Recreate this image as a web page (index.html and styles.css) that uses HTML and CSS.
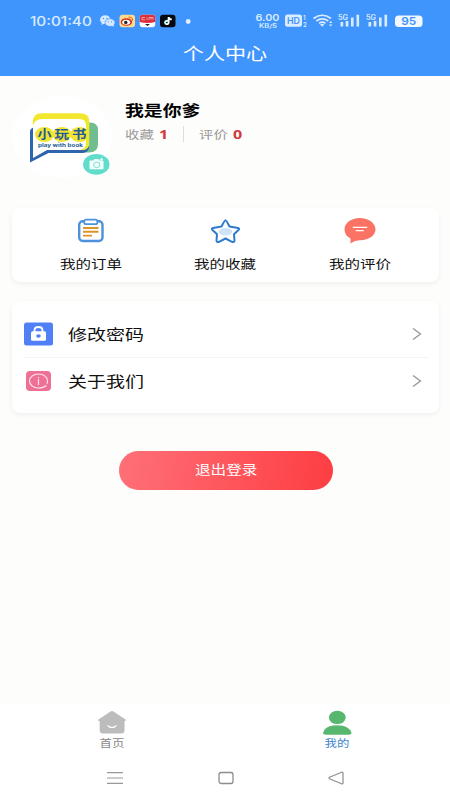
FILE: index.html
```html
<!DOCTYPE html>
<html lang="zh-CN">
<head>
<meta charset="utf-8">
<title>个人中心</title>
<link rel="stylesheet" href="styles.css">
</head>
<body>
<div class="app">
  <header class="header">
    <div class="status">
      <div class="status-left">
        <span class="clock"><span class="wide wide-left">10:01:40</span></span>
        <svg width="96" height="14" viewBox="0 0 96 14">
          <g fill="#d5e9ff"><ellipse cx="5.2" cy="5.6" rx="5.2" ry="4.3"/><path d="M2 8l-.5 3 3-1.5z"/></g>
          <ellipse cx="10" cy="8.6" rx="5" ry="3.9" fill="#d5e9ff" stroke="#4095fd" stroke-width=".7"/><path d="M11 11.5l3 1.2-.6-2.5z" fill="#d5e9ff"/>
          <g fill="#4095fd"><circle cx="3.5" cy="4.5" r=".7"/><circle cx="7" cy="4.5" r=".7"/><circle cx="8.3" cy="7.8" r=".6"/><circle cx="11.6" cy="7.8" r=".6"/></g>
          <rect x="19.5" y=".8" width="15.5" height="12.4" rx="3" fill="#fbdc8e"/>
          <ellipse cx="26.4" cy="8" rx="5.7" ry="3.8" fill="#d92d20"/><ellipse cx="26.2" cy="8.3" rx="4" ry="2.5" fill="#fff"/><circle cx="25.8" cy="8.4" r="1.7" fill="#222"/>
          <path d="M28.5 3.2q4.3-.5 4 3.400M28.800 5q2 0 1.800 1.700" fill="none" stroke="#e35b25" stroke-width="1"/>
          <rect x="39.7" y=".8" width="15.5" height="12.4" rx="3" fill="#fff"/><path d="M39.7 8V4q0-3.200 3.200-3.200H52q3.200 0 3.200 3.200v4q-7.700 2.200-15.500 0z" fill="#dc3038"/>
          <path d="M42 3.500h3M42 3.500v2.300h3M47 3.400v2.400M49 5.800V3.500h4v2.300M51 3.500v2.300" fill="none" stroke="#f7b8ba" stroke-width=".8"/><path d="M45 10l2.500 2 2.500-2z" fill="#222"/>
          <rect x="60" y=".8" width="15.500" height="12.400" rx="3" fill="#07070d"/>
          <g fill="none" stroke-width="1.500"><path d="M67.500 6.600q-3 0-2.700 2.100.5 1.800 2.400 1.300 1.200-.4 1.100-2V3.200q.6 2.200 3 2.400" stroke="#4de1e4"/><path d="M68 6.800q-3 0-2.700 2.100.5 1.800 2.400 1.300 1.200-.4 1.100-2V3.200q.6 2.200 3 2.400" stroke="#fff"/></g>
          <circle cx="88.200" cy="7.500" r="2.400" fill="#e1efff"/>
        </svg>
      </div>
      <svg class="status-right" width="170" height="16" viewBox="0 0 170 16" fill="#d9ebff">
        <g class="status-text">
          <text x="0.500" y="8.300" font-size="9.200" textLength="24" lengthAdjust="spacingAndGlyphs">6.00</text>
          <text x="4" y="14.600" font-size="5.600" textLength="18" lengthAdjust="spacingAndGlyphs">KB/S</text>
          <rect x="30" y="1.500" width="17" height="12.300" rx="2.500"/>
          <text x="32" y="11.300" font-size="9.500" fill="#4095fd" textLength="13" lengthAdjust="spacingAndGlyphs">HD</text>
          <text x="48" y="7" font-size="6">1</text><text x="48" y="13.500" font-size="6">2</text>
          <text x="83" y="6.800" font-size="7" textLength="10" lengthAdjust="spacingAndGlyphs">5G</text>
          <text x="111" y="6.800" font-size="7" textLength="10" lengthAdjust="spacingAndGlyphs">5G</text>
          <rect x="140" y="2.500" width="27.500" height="11.500" rx="3.500" fill="#f0f7ff"/>
          <text x="146.200" y="12" font-size="10.500" fill="#4095fd" textLength="15" lengthAdjust="spacingAndGlyphs">95</text>
        </g>
        <g fill="none" stroke="#d9ebff" stroke-width="1.600"><path d="M58.500 5.500q8.700-6.400 17.500 0M61.300 8q6-4.200 12 0M64 10.300q3.300-2.400 6.500 0"/></g>
        <path d="M65 11.500q2.200-1.300 4.400 0l-2.200 2.200zM74 9.900l1.700-2 1.700 2zM74 11.500l1.700 2 1.700-2z"/>
        <path d="M85.500 9h2.700v4.500h-2.700zM90.700 8h2.700v5.500h-2.700zM96 4.500h2.600v9H96zM101.500 1.800h2.600v11.700h-2.600zM113.500 9h2.700v4.500h-2.700zM118.700 8h2.700v5.500h-2.700zM124 4.500h2.600v9H124zM129.500 1.800h2.600v11.700h-2.600z"/>
      </svg>
    </div>
    <h1 class="title"><span class="wide">个人中心</span></h1>
  </header>

  <main class="main">
    <section class="profile">
      <div class="avatar">
        <svg width="100" height="78" viewBox="0 0 100 78">
          <path d="M76 15.500h4q8 0 8 7.500v14q0 8.500-9 8.500H66z" fill="#70bd90"/>
          <path d="M25 20.500Q20 20.500 20 25V55.500L38.500 46H72q5 0 7-4.500V20.500z" fill="#2f66ab"/>
          <path d="M23 17V51L37 43H72q5.500 0 5.500-6V12H28z" fill="#fff"/>
          <path d="M22.800 19v-4q0-8.800 9-8.800H70q9.300 0 9.300 8.300V36q0 6-5.500 7H70q6-1.500 6-6.500V18q0-6-7-6H32q-7 0-9.200 7z" fill="#f2e72f"/>
          <g fill="#f2e531"><ellipse cx="34.500" cy="27.500" rx="9.500" ry="7.500"/><ellipse cx="52" cy="27.500" rx="9.500" ry="7.500"/><ellipse cx="69.500" cy="27.500" rx="9.500" ry="7.500"/></g>
          <g class="logo-cn" font-size="12">
            <text x="27.500" y="32" textLength="14" lengthAdjust="spacingAndGlyphs">小</text>
            <text x="44.500" y="32" textLength="14.500" lengthAdjust="spacingAndGlyphs">玩</text>
            <text x="62" y="32" textLength="14.500" lengthAdjust="spacingAndGlyphs">书</text>
          </g>
          <text class="logo-en" x="28" y="39.800" font-size="5.200" textLength="45" lengthAdjust="spacingAndGlyphs">play with book</text>
        </svg>
        <span class="camera">
          <svg width="27" height="21" viewBox="0 0 27 21">
            <ellipse cx="13.300" cy="10.400" rx="13.200" ry="10.300" fill="#62dccb"/>
            <path d="M7.500 6.500h3l1-1.500h4l1 1.500h3q1 0 1 1v6.800q0 1-1 1h-12q-1 0-1-1V7.500q0-1 1-1z" fill="#f4fffd"/>
            <ellipse cx="13.700" cy="10.900" rx="3.200" ry="2.700" fill="none" stroke="#62dccb" stroke-width=".9"/>
            <path d="M18.500 3.500l.7 1.300 1.500.5-1.500.5-.7 1.300-.7-1.300-1.500-.5 1.500-.5z" fill="#f4fffd"/>
          </svg>
        </span>
      </div>
      <div class="who">
        <h2 class="name"><span class="wide wide-left">我是你爹</span></h2>
        <div class="counts">
          <span class="count-label"><span class="wide wide-left">收藏</span></span><b class="count"><span class="wide wide-left">1</span></b>
          <i class="bar"></i>
          <span class="count-label"><span class="wide wide-left">评价</span></span><b class="count"><span class="wide wide-left">0</span></b>
        </div>
      </div>
    </section>

    <section class="card shortcuts">
      <a class="shortcut">
        <svg width="34" height="28" viewBox="0 0 34 28">
          <rect x="5.200" y="4.300" width="23.300" height="19.700" rx="3.500" fill="#fff" stroke="#4b91dc" stroke-width="2.400"/>
          <rect x="10.200" y="2.700" width="13.200" height="4.500" rx="2" fill="#fff" stroke="#4b91dc" stroke-width="1.700"/>
          <path d="M9 11h15.500M9 14.800h15.500M9 18.600h9" stroke="#df9428" stroke-width="1.900"/>
        </svg>
        <span class="wide">我的订单</span>
      </a>
      <a class="shortcut">
        <svg width="34" height="28" viewBox="0 0 34 28">
          <path d="M16.500 3.200Q17.300 3.200 20.500 9.500L29 11Q31 11.700 29.500 13L25 17.300 25.500 23.500Q25.300 25.700 23 24.800L16.500 21.500 10 24.800Q7.700 25.700 7.500 23.500L8 17.300 3.500 13Q2 11.700 4 11L12.500 9.500Q15.700 3.200 16.500 3.200z" fill="#fff" stroke="#2c7ccd" stroke-width="2" stroke-linejoin="round"/>
          <ellipse cx="16.500" cy="14.700" rx="6.700" ry="3.800" fill="#cfe4fb"/>
        </svg>
        <span class="wide">我的收藏</span>
      </a>
      <a class="shortcut">
        <svg width="34" height="28" viewBox="0 0 34 28">
          <path d="M16.800 1C25.500 1 32.500 6 32.500 12.300 32.500 18.500 26 23 17.500 23.300Q12 23 7.500 26.500V21.500Q1.500 18.500 1.500 12.300C1.500 6 8 1 16.800 1z" fill="#fb7364"/>
          <path d="M9.700 10.300h14.500M12.700 13.700h8" stroke="#fff" stroke-width="1.300"/>
        </svg>
        <span class="wide">我的评价</span>
      </a>
    </section>

    <section class="card menu">
      <a class="row">
        <svg width="29" height="24" viewBox="0 0 29 24">
          <rect x="0" y=".5" width="29" height="23" rx="2.500" fill="#5080f6"/>
          <path d="M10.500 10V8.500Q10.500 5 14.500 5t4 3.500V10" fill="none" stroke="#fff" stroke-width="1.800"/>
          <rect x="7" y="9.300" width="15" height="9.400" rx="1.500" fill="#fff"/><ellipse cx="14.500" cy="14" rx="2.300" ry="1.800" fill="#5080f6"/>
        </svg>
        <span class="row-label"><span class="wide wide-left">修改密码</span></span>
        <svg class="chevron" width="10" height="14" viewBox="0 0 10 14"><path d="M1 1.600L8.500 7 1 12.400" fill="none" stroke="#929292" stroke-width="1.200"/></svg>
      </a>
      <a class="row">
        <svg width="29" height="24" viewBox="0 0 29 24">
          <rect x="2" y="2" width="25" height="20" rx="4" fill="#ee7095"/>
          <path d="M22.300 16.500Q19.500 19 14.500 19C9.500 19 5.500 16 5.500 12S9.500 5 14.500 5s9 3 9 7q0 1.500-.6 2.600" fill="none" stroke="#ffe3eb" stroke-width="1.200"/>
          <path d="M14.500 8v1.200M14.500 10.200v5.800" stroke="#ffe3eb" stroke-width="1.200"/>
        </svg>
        <span class="row-label"><span class="wide wide-left">关于我们</span></span>
        <svg class="chevron" width="10" height="14" viewBox="0 0 10 14"><path d="M1 1.600L8.500 7 1 12.400" fill="none" stroke="#929292" stroke-width="1.200"/></svg>
      </a>
    </section>

    <button class="logout"><span class="wide">退出登录</span></button>
  </main>

  <footer class="footer">
    <nav class="tabs">
      <a class="tab">
        <svg width="30" height="26" viewBox="0 0 30 26">
          <path d="M13.500 1.500Q15 .5 16.500 1.500L28.500 9.500Q29.500 11 27.500 11.300V20.500Q27.500 23.500 24 23.500H6Q2.700 23.500 2.700 20.500V11.300Q.5 11 1.500 9.500z" fill="#bcbcbc"/>
          <path d="M11 16q4 3.200 8 0" fill="none" stroke="#fff" stroke-width="1.500" stroke-linecap="round"/>
        </svg>
        <span class="wide">首页</span>
      </a>
      <a class="tab tab-active">
        <svg width="30" height="26" viewBox="0 0 30 26">
          <ellipse cx="15.300" cy="7.400" rx="8.400" ry="6.700" fill="#58b76e"/>
          <path d="M15.300 15.200C23 15.200 29 18.500 29.500 23.300Q29 24.800 24 24.800H6.500Q1.500 24.800 1 23.300 2 18.500 7.500 16.300 11 15.200 15.300 15.200z" fill="#58b76e"/>
        </svg>
        <span class="wide">我的</span>
      </a>
    </nav>
    <div class="system">
      <svg width="18" height="14" viewBox="0 0 18 14"><path d="M1 1.600h16M1 7h16M1 12.400h16" stroke="#999" stroke-width="1.200"/></svg>
      <svg width="18" height="14" viewBox="0 0 18 14"><rect x="2" y="1.500" width="14" height="11" rx="2.200" fill="none" stroke="#8d8d8d" stroke-width="1.300"/></svg>
      <svg width="18" height="14" viewBox="0 0 18 14"><path d="M2.500 6.300L14.500 1.200Q16 .8 16 2v10Q16 13.200 14.500 12.800L2.500 7.700Q1.500 7 2.500 6.300z" fill="none" stroke="#8d8d8d" stroke-width="1.200"/></svg>
    </div>
  </footer>
</div>
</body>
</html>
```

FILE: styles.css
```css
* { box-sizing: border-box; }

body {
  margin: 0;
  background: #fdfdfb;
  font-family: "Noto Sans", "Noto Sans CJK SC", sans-serif;
  color: #111;
}

.app {
  width: 450px;
  height: 800px;
  display: flex;
  flex-direction: column;
  overflow: hidden;
}

svg { display: block; flex: none; }

.wide {
  display: inline-block;
  white-space: nowrap;
  transform: scaleX(1.24);
}
.wide-left { transform-origin: left center; }

.header {
  height: 76px;
  padding-top: 13px;
  background: #4095fd;
  color: #fff;
}
.status {
  display: flex;
  justify-content: space-between;
  height: 16px;
  padding: 0 25px 0 30px;
}
.status-left { display: flex; align-items: center; }
.clock {
  width: 70px;
  font: 500 13px/16px Inter, sans-serif;
  color: #d9ebff;
}
.clock .wide { transform: scaleX(1.18); }
.status-text { font-family: Inter, sans-serif; font-weight: 600; }
.title {
  margin: 12px 0 0;
  text-align: center;
  font-size: 17px;
  line-height: 26px;
  font-weight: 400;
}

.main { flex: 1; padding: 20px 11px 0 12px; }

.profile { display: flex; height: 112px; }
.avatar {
  position: relative;
  width: 100px;
  height: 82px;
  padding-top: 11px;
  background: #fff;
  border-radius: 50%;
}
.avatar > svg { margin-left: -2px; }
.logo-cn { font-family: "Noto Sans CJK SC", sans-serif; font-weight: 700; fill: #245b96; }
.logo-en { font-family: Inter, sans-serif; font-weight: 700; fill: #245b96; }
.camera { position: absolute; left: 71px; top: 58px; }

.who { padding: 3px 0 0 13px; }
.name { margin: 0; font-size: 15.2px; line-height: 22px; font-weight: 700; color: #000; }
.counts { display: flex; align-items: center; height: 26px; }
.count-label { width: 34px; font-size: 11.6px; color: #999; }
.count { width: 15px; font: 700 13px/16px "Noto Sans", sans-serif; color: #d5383c; }
.bar { width: 1px; height: 16px; margin: 0 15px 0 9px; background: #ddd; }

.card {
  background: #fff;
  border-radius: 8px;
  box-shadow: 0 2px 5px rgba(0, 0, 0, .06);
}
.shortcuts {
  display: grid;
  grid-template-columns: repeat(3, 134.5px);
  justify-content: center;
  height: 74px;
  padding-top: 9px;
}
.shortcut {
  display: flex;
  flex-direction: column;
  align-items: center;
  gap: 10px;
  font-size: 12.5px;
  line-height: 20px;
}

.menu { height: 112px; margin-top: 19px; padding: 9px 10px 0 12px; }
.row {
  display: flex;
  align-items: center;
  height: 47px;
}
.row + .row { height: 46px; border-top: 1px solid #f4f4f4; }
.row-label { flex: 1; padding-left: 15px; font-size: 15.3px; line-height: 24px; }
.chevron { margin-right: 7px; }

.logout {
  display: block;
  width: 214px;
  height: 39px;
  margin: 38px 0 0 107px;
  padding: 0 0 1px;
  border: 0;
  border-radius: 20px;
  background: linear-gradient(100deg, #ff7078, #fd3d42);
  font: 400 12.6px/20px "Noto Sans", "Noto Sans CJK SC", sans-serif;
  color: #fff;
}

.footer { height: 96px; background: #fff; }
.tabs { display: grid; grid-template-columns: 1fr 1fr; height: 64px; padding: 6px 1px 0 0; }
.tab {
  display: flex;
  flex-direction: column;
  align-items: center;
  font-size: 10px;
  line-height: 14px;
  color: #888;
}
.tab-active { color: #3e86cb; }
.system { display: flex; justify-content: space-between; padding: 3px 105px 0 106px; }
```
